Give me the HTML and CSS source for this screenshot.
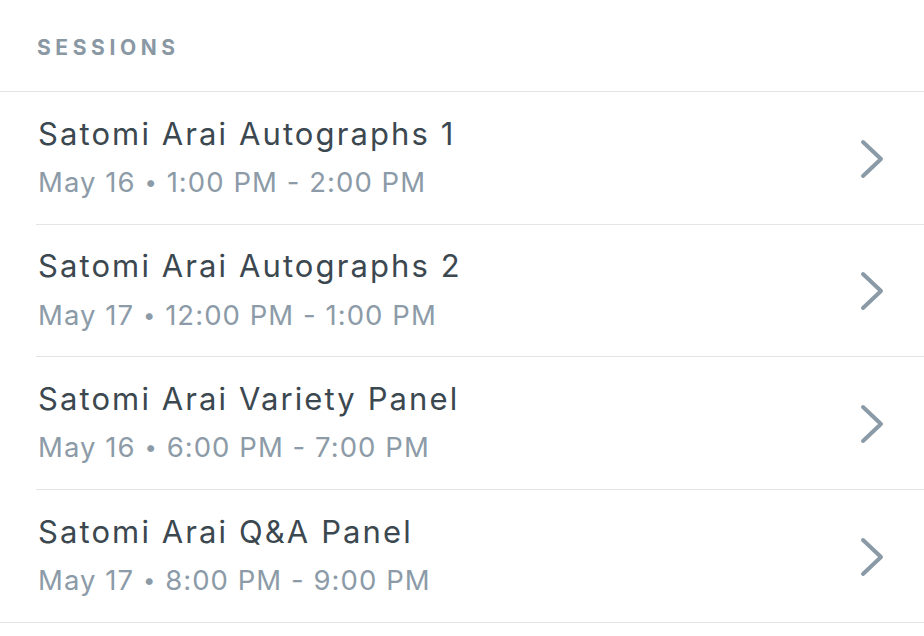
FILE: index.html
```html
<!DOCTYPE html>
<html>
<head>
<meta charset="utf-8">
<link rel="stylesheet" href="styles.css">
</head>
<body>
<div class="header">SESSIONS</div>
<ul class="list">
  <li class="row">
    <div class="text">
      <div class="title">Satomi Arai Autographs 1</div>
      <div class="sub">May 16 <span class="dot">•</span> 1:00 PM - 2:00 PM</div>
    </div>
    <svg class="chev" width="30" height="42" viewBox="0 0 30 42"><path d="M5 4 L23 21 L5 38" fill="none" stroke="#8a9aa6" stroke-width="4" stroke-linecap="round" stroke-linejoin="round"/></svg>
  </li>
  <li class="row">
    <div class="text">
      <div class="title">Satomi Arai Autographs 2</div>
      <div class="sub">May 17 <span class="dot">•</span> 12:00 PM - 1:00 PM</div>
    </div>
    <svg class="chev" width="30" height="42" viewBox="0 0 30 42"><path d="M5 4 L23 21 L5 38" fill="none" stroke="#8a9aa6" stroke-width="4" stroke-linecap="round" stroke-linejoin="round"/></svg>
  </li>
  <li class="row">
    <div class="text">
      <div class="title">Satomi Arai Variety Panel</div>
      <div class="sub">May 16 <span class="dot">•</span> 6:00 PM - 7:00 PM</div>
    </div>
    <svg class="chev" width="30" height="42" viewBox="0 0 30 42"><path d="M5 4 L23 21 L5 38" fill="none" stroke="#8a9aa6" stroke-width="4" stroke-linecap="round" stroke-linejoin="round"/></svg>
  </li>
  <li class="row last">
    <div class="text">
      <div class="title">Satomi Arai Q&amp;A Panel</div>
      <div class="sub">May 17 <span class="dot">•</span> 8:00 PM - 9:00 PM</div>
    </div>
    <svg class="chev" width="30" height="42" viewBox="0 0 30 42"><path d="M5 4 L23 21 L5 38" fill="none" stroke="#8a9aa6" stroke-width="4" stroke-linecap="round" stroke-linejoin="round"/></svg>
  </li>
</ul>
</body>
</html>
```
FILE: styles.css
```css
html, body {
  margin: 0;
  padding: 0;
  background: #ffffff;
  font-family: Inter, "Open Sans", sans-serif;
}
.header {
  height: 92px;
  box-sizing: border-box;
  padding: 35px 0 0 37px;
  font-size: 21px;
  line-height: 26px;
  font-weight: 700;
  letter-spacing: 4.6px;
  color: #8a98a4;
  border-bottom: 1px solid #e2e4e6;
}
.list {
  list-style: none;
  margin: 0;
  padding: 0 0 0 36px;
  border-bottom: 1px solid #e2e4e6;
}
.row {
  display: flex;
  align-items: center;
  height: 132.5px;
  box-sizing: border-box;
  border-bottom: 1px solid #e2e4e6;
  padding-right: 36px;
}
.row.last {
  border-bottom: none;
}
.text {
  flex: 1;
  padding-left: 2px;
}
.title {
  font-size: 31px;
  line-height: 40px;
  letter-spacing: 2.1px;
  color: #3c4850;
}
.sub {
  font-size: 27.5px;
  line-height: 40px;
  letter-spacing: 1.05px;
  margin-top: 8.5px;
  color: #8c9ba7;
}
.dot {
  font-size: 22px;
  vertical-align: 2px;
}
.chev {
  display: block;
  margin-top: 2px;
}
```
